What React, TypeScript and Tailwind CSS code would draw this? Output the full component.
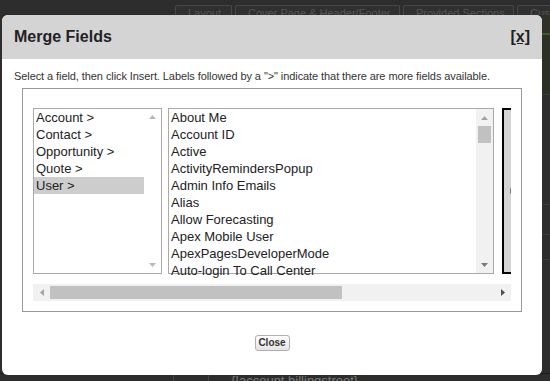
import React from 'react';

const CATEGORIES = ['Account >', 'Contact >', 'Opportunity >', 'Quote >', 'User >'];
const FIELDS = [
  'About Me',
  'Account ID',
  'Active',
  'ActivityRemindersPopup',
  'Admin Info Emails',
  'Alias',
  'Allow Forecasting',
  'Apex Mobile User',
  'ApexPagesDeveloperMode',
  'Auto-login To Call Center',
];
const TABS = [
  { label: 'Layout', w: 'w-[57px]' },
  { label: 'Cover Page & Header/Footer', w: 'w-[165px]' },
  { label: 'Provided Sections', w: 'w-[111px]' },
  { label: 'Custom Sections', w: 'w-[110px]' },
];

type Dir = 'up' | 'down' | 'left' | 'right';

function Arrow({ dir, color }: { dir: Dir; color: string }) {
  const vertical = dir === 'up' || dir === 'down';
  const pts = {
    up: '0,4 3.5,0 7,4',
    down: '0,0 7,0 3.5,4',
    left: '4,0 4,7 0,3.5',
    right: '0,0 4,3.5 0,7',
  }[dir];
  return (
    <svg width={vertical ? 7 : 4} height={vertical ? 4 : 7} viewBox={vertical ? '0 0 7 4' : '0 0 4 7'}>
      <polygon points={pts} fill={color} />
    </svg>
  );
}

export default function App() {
  return (
    <div className="relative w-[550px] h-[381px] overflow-hidden bg-[#2d2d2d] font-['Liberation_Sans',Arial,sans-serif] flex flex-col">
      {/* page behind the dialog */}
      <div className="h-[15px] flex items-end pl-[175px] gap-[3px] shrink-0">
        {TABS.map((t) => (
          <div key={t.label} className={`${t.w} h-[10px] shrink-0 border border-b-0 border-[#474747] rounded-t-[2px] bg-[#303030] text-[11px] leading-[15px] text-[#555] px-[12px] whitespace-nowrap overflow-hidden`}>
            {t.label}
          </div>
        ))}
      </div>
      <div className="flex-1 flex justify-end">
        <div className="w-[8px] flex flex-col">
          <div className="h-[20px] border-b-2 border-[#3c5a2a] bg-[#2f3127]" />
          <div className="h-[60px] bg-[#2c2f25] border-b border-[#3a3a3a]" />
          <div className="h-[110px] border-b border-[#3a3a3a]" />
          <div className="h-[30px] border-b border-[#3a3a3a]" />
          <div className="h-[25px] border-b border-[#3a3a3a]" />
        </div>
      </div>
      <div className="h-[8px] shrink-0 border-t border-[#1c1c1c] flex overflow-hidden">
        <div className="w-[174px] border-r border-[#444]" />
        <div className="w-[35px] border-r border-[#444]" />
        <div className="pl-[22px] text-[13px] leading-[13px] text-[#7a7a7a]">{'{!account.billingstreet}'}</div>
      </div>

      {/* dialog */}
      <div className="absolute left-[2px] top-[15px] w-[540px] h-[360px] bg-white rounded-[6px] flex flex-col">
        <div className="h-[44px] bg-[#d4d4d4] rounded-t-[6px] flex items-center justify-between px-[12px] text-[#222]">
          <span className="text-[16px] font-bold">Merge Fields</span>
          <span className="text-[16px] font-bold underline">[x]</span>
        </div>

        <p className="mt-[11px] px-[12px] text-[11px] leading-[13px] tracking-[-0.08px] text-[#333] whitespace-nowrap">
          Select a field, then click Insert. Labels followed by a "&gt;" indicate that there are more fields available.
        </p>

        <div className="mt-[5px] mx-[20px] border border-[#999] pl-[10px] pr-[10px] pt-[19px] pb-[10px]">
          <div className="w-[478px] overflow-hidden">
            <div className="flex h-[166px]">
              {/* category list */}
              <div className="w-[129px] shrink-0 border border-[#a9a9a9] flex">
                <div className="w-[110px] text-[13px] leading-[17px] text-[#222]">
                  {CATEGORIES.map((c) => (
                    <div key={c} className={`h-[17px] pl-[2px] ${c === 'User >' ? 'bg-[#cdcdcd]' : ''}`}>{c}</div>
                  ))}
                </div>
                <div className="w-[17px] flex flex-col items-center justify-between py-[6px]">
                  <Arrow dir="up" color="#b8b8b8" />
                  <Arrow dir="down" color="#b8b8b8" />
                </div>
              </div>

              {/* field list */}
              <div className="ml-[6px] w-[326px] shrink-0 border border-[#a9a9a9] flex">
                <div className="w-[307px] text-[13px] leading-[17px] text-[#222]">
                  {FIELDS.map((f) => (
                    <div key={f} className="h-[17px] pl-[2px] whitespace-nowrap">{f}</div>
                  ))}
                </div>
                <div className="w-[17px] bg-[#f1f1f1] flex flex-col">
                  <div className="h-[17px] flex items-center justify-center">
                    <Arrow dir="up" color="#a3a3a3" />
                  </div>
                  <div className="mx-[2px] h-[17px] bg-[#c1c1c1]" />
                  <div className="flex-1" />
                  <div className="h-[17px] flex items-center justify-center">
                    <Arrow dir="down" color="#7a7a7a" />
                  </div>
                </div>
              </div>

              {/* insert panel, mostly scrolled out of view */}
              <div className="ml-[8px] w-[100px] shrink-0 border-2 border-black bg-[#d4d4d4] flex items-center">
                <div className="ml-[6px] w-[3px] h-[6px] rounded-full bg-[#777]" />
              </div>
            </div>

            {/* horizontal scrollbar */}
            <div className="mt-[10px] h-[17px] bg-[#f1f1f1] flex items-center">
              <div className="w-[17px] h-full flex items-center justify-center">
                <Arrow dir="left" color="#a3a3a3" />
              </div>
              <div className="w-[292px] h-[13px] bg-[#c1c1c1]" />
              <div className="flex-1" />
              <div className="w-[17px] h-full flex items-center justify-center">
                <Arrow dir="right" color="#505050" />
              </div>
            </div>
          </div>
        </div>

        <div className="mt-[23px] flex justify-center">
          <button className="h-[16px] w-[35px] border border-[#b0b0b0] rounded-[3px] bg-linear-to-b from-white to-[#e4e4e4] text-[10px] leading-[14px] font-bold text-[#333]">
            Close
          </button>
        </div>
      </div>
    </div>
  );
}
